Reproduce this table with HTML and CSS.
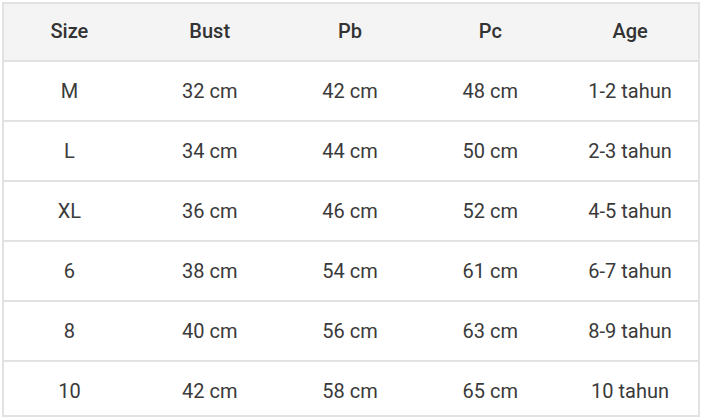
FILE: index.html
```html
<!DOCTYPE html>
<html>
<head>
<meta charset="utf-8">
<link rel="stylesheet" href="styles.css">
</head>
<body>
<div class="wrap">
<table class="size-table">
  <thead>
    <tr><th>Size</th><th>Bust</th><th>Pb</th><th>Pc</th><th>Age</th></tr>
  </thead>
  <tbody>
    <tr><td>M</td><td>32 cm</td><td>42 cm</td><td>48 cm</td><td>1-2 tahun</td></tr>
    <tr><td>L</td><td>34 cm</td><td>44 cm</td><td>50 cm</td><td>2-3 tahun</td></tr>
    <tr><td>XL</td><td>36 cm</td><td>46 cm</td><td>52 cm</td><td>4-5 tahun</td></tr>
    <tr><td>6</td><td>38 cm</td><td>54 cm</td><td>61 cm</td><td>6-7 tahun</td></tr>
    <tr><td>8</td><td>40 cm</td><td>56 cm</td><td>63 cm</td><td>8-9 tahun</td></tr>
    <tr class="last"><td>10</td><td>42 cm</td><td>58 cm</td><td>65 cm</td><td>10 tahun</td></tr>
  </tbody>
</table>
</div>
</body>
</html>
```
FILE: styles.css
```css
html, body {
  margin: 0;
  padding: 0;
  background: #ffffff;
}
.wrap {
  padding: 2px;
}
.size-table {
  width: 698px;
  border-collapse: separate;
  border-spacing: 0;
  border: 2px solid #e2e2e2;
  font-family: Roboto, "Noto Sans", sans-serif;
  font-size: 20px;
  color: #333333;
  table-layout: fixed;
}
.size-table th,
.size-table td {
  text-align: center;
  vertical-align: top;
  padding: 0;
  line-height: 20px;
  box-sizing: border-box;
}
.size-table th:nth-child(1),
.size-table td:nth-child(1) { padding-right: 8px; }
.size-table th:nth-child(2),
.size-table td:nth-child(2) { padding-right: 5px; }
.size-table th:nth-child(3),
.size-table td:nth-child(3) { padding-right: 2px; }
.size-table th:nth-child(4),
.size-table td:nth-child(4) { padding-left: 1px; }
.size-table th:nth-child(5),
.size-table td:nth-child(5) { padding-left: 3px; }
.size-table th {
  background: #f4f4f4;
  font-weight: 500;
  height: 58px;
  padding-top: 17px;
  border-bottom: 2px solid #e2e2e2;
}
.size-table td {
  height: 60px;
  padding-top: 19px;
  border-bottom: 2px solid #e2e2e2;
  color: #3a3a3a;
}
.size-table tr.last td {
  height: 53px;
  border-bottom: none;
}
```
